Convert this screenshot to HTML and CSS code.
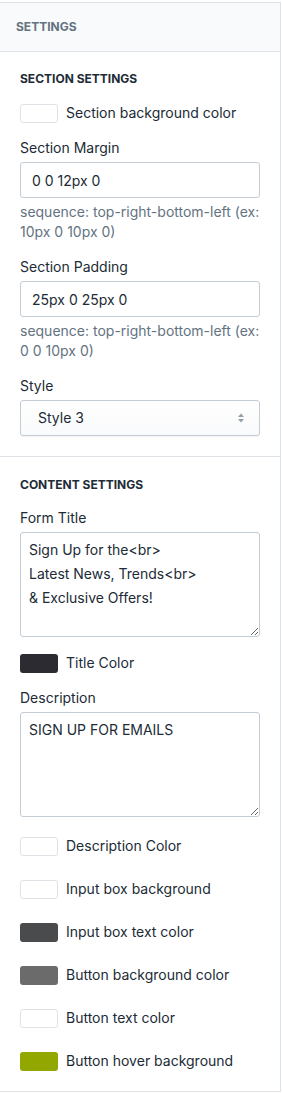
FILE: index.html
```html
<!DOCTYPE html>
<html lang="en">
<head>
    <meta charset="UTF-8">
    <meta name="viewport" content="width=device-width, initial-scale=1.0">
    <title>Settings</title>
    <link rel="stylesheet" href="styles.css">
</head>
<body>
    <div class="panel">
        <!-- Panel Header -->
        <div class="panel-header">Settings</div>

        <!-- Section Settings -->
        <div class="section section-first">
            <h3 class="section-title">Section Settings</h3>

            <div class="swatch-row">
                <span class="swatch white"></span>
                <span class="swatch-label">Section background color</span>
            </div>

            <div class="field">
                <label class="field-label">Section Margin</label>
                <input type="text" class="text-input" value="0 0 12px 0">
                <p class="help-text">sequence: top-right-bottom-left (ex: 10px 0 10px 0)</p>
            </div>

            <div class="field">
                <label class="field-label">Section Padding</label>
                <input type="text" class="text-input" value="25px 0 25px 0">
                <p class="help-text">sequence: top-right-bottom-left (ex: 0 0 10px 0)</p>
            </div>

            <div class="field">
                <label class="field-label">Style</label>
                <div class="select-box">
                    <span>Style 3</span>
                    <svg class="select-arrows" width="8" height="12" viewBox="0 0 8 12">
                        <path d="M4 1.5 L7 5 H1 Z" fill="#919eab"/>
                        <path d="M4 10.5 L7 7 H1 Z" fill="#919eab"/>
                    </svg>
                </div>
            </div>
        </div>

        <!-- Content Settings -->
        <div class="section">
            <h3 class="section-title">Content Settings</h3>

            <div class="field">
                <label class="field-label">Form Title</label>
                <textarea class="text-area">Sign Up for the&lt;br&gt;
Latest News, Trends&lt;br&gt;
&amp; Exclusive Offers!</textarea>
            </div>

            <div class="swatch-row">
                <span class="swatch title-color"></span>
                <span class="swatch-label">Title Color</span>
            </div>

            <div class="field">
                <label class="field-label">Description</label>
                <textarea class="text-area">SIGN UP FOR EMAILS</textarea>
            </div>

            <div class="swatch-row spaced">
                <span class="swatch white"></span>
                <span class="swatch-label">Description Color</span>
            </div>
            <div class="swatch-row spaced">
                <span class="swatch white"></span>
                <span class="swatch-label">Input box background</span>
            </div>
            <div class="swatch-row spaced">
                <span class="swatch input-text"></span>
                <span class="swatch-label">Input box text color</span>
            </div>
            <div class="swatch-row spaced">
                <span class="swatch button-bg"></span>
                <span class="swatch-label">Button background color</span>
            </div>
            <div class="swatch-row spaced">
                <span class="swatch white"></span>
                <span class="swatch-label">Button text color</span>
            </div>
            <div class="swatch-row spaced">
                <span class="swatch button-hover"></span>
                <span class="swatch-label">Button hover background</span>
            </div>
        </div>
    </div>
</body>
</html>
```

FILE: styles.css
```css
* {
    box-sizing: border-box;
    margin: 0;
    padding: 0;
}

body {
    font-family: 'Inter', 'Noto Sans', sans-serif;
    font-size: 14px;
    line-height: 20px;
    color: #212b36;
    background: #fff;
    padding-top: 2px;
}

/* Panel */
.panel {
    width: 281px;
    border-top: 1px solid #dfe3e8;
    border-right: 1px solid #dfe3e8;
    border-bottom: 1px solid #dfe3e8;
}

.panel-header {
    height: 49px;
    padding: 0 16px 1px;
    display: flex;
    align-items: center;
    background: #f9fafb;
    border-bottom: 1px solid #dfe3e8;
    font-size: 12px;
    font-weight: 700;
    color: #637381;
    text-transform: uppercase;
}

.section {
    padding: 20px 20px 20px;
}

.section-first {
    padding-top: 19px;
}

.section + .section {
    border-top: 1px solid #dfe3e8;
}

.section-title {
    font-size: 12px;
    font-weight: 700;
    line-height: 16px;
    text-transform: uppercase;
    color: #212b36;
}

/* Fields */
.field {
    margin-top: 15px;
}

.field-label {
    display: block;
    margin-bottom: 4px;
}

.text-input {
    display: block;
    width: 100%;
    height: 36px;
    padding: 0 11px;
    border: 1px solid #c4cdd5;
    border-radius: 3px;
    font-family: inherit;
    font-size: 14px;
    color: #212b36;
    background: #fff;
    outline: none;
}

.help-text {
    margin-top: 4px;
    color: #637381;
}

.select-box {
    height: 36px;
    padding: 0 14px 0 17px;
    display: flex;
    align-items: center;
    justify-content: space-between;
    border: 1px solid #c4cdd5;
    border-radius: 3px;
    background: linear-gradient(to bottom, #fff, #f9fafb);
    box-shadow: 0 1px 0 rgba(22, 29, 37, 0.05);
}

.text-area {
    display: block;
    width: 100%;
    height: 105px;
    padding: 5px 8px;
    border: 1px solid #c4cdd5;
    border-radius: 3px;
    font-family: inherit;
    font-size: 14px;
    line-height: 24px;
    color: #212b36;
    outline: none;
    resize: vertical;
}

/* Color swatches */
.swatch-row {
    display: flex;
    align-items: center;
    height: 20px;
    margin-top: 16px;
}

.field + .swatch-row.spaced {
    margin-top: 19px;
}

.swatch-row.spaced + .swatch-row.spaced {
    margin-top: 23px;
}

.swatch {
    width: 38px;
    height: 19px;
    border-radius: 3px;
    margin-right: 8px;
    flex-shrink: 0;
}

.white {
    background: #fff;
    border: 1px solid #dfe3e8;
}

.title-color {
    background: #2b2b31;
}

.input-text {
    background: #4a4b4d;
}

.button-bg {
    background: #6b6b6b;
}

.button-hover {
    background: #92a800;
}
```
